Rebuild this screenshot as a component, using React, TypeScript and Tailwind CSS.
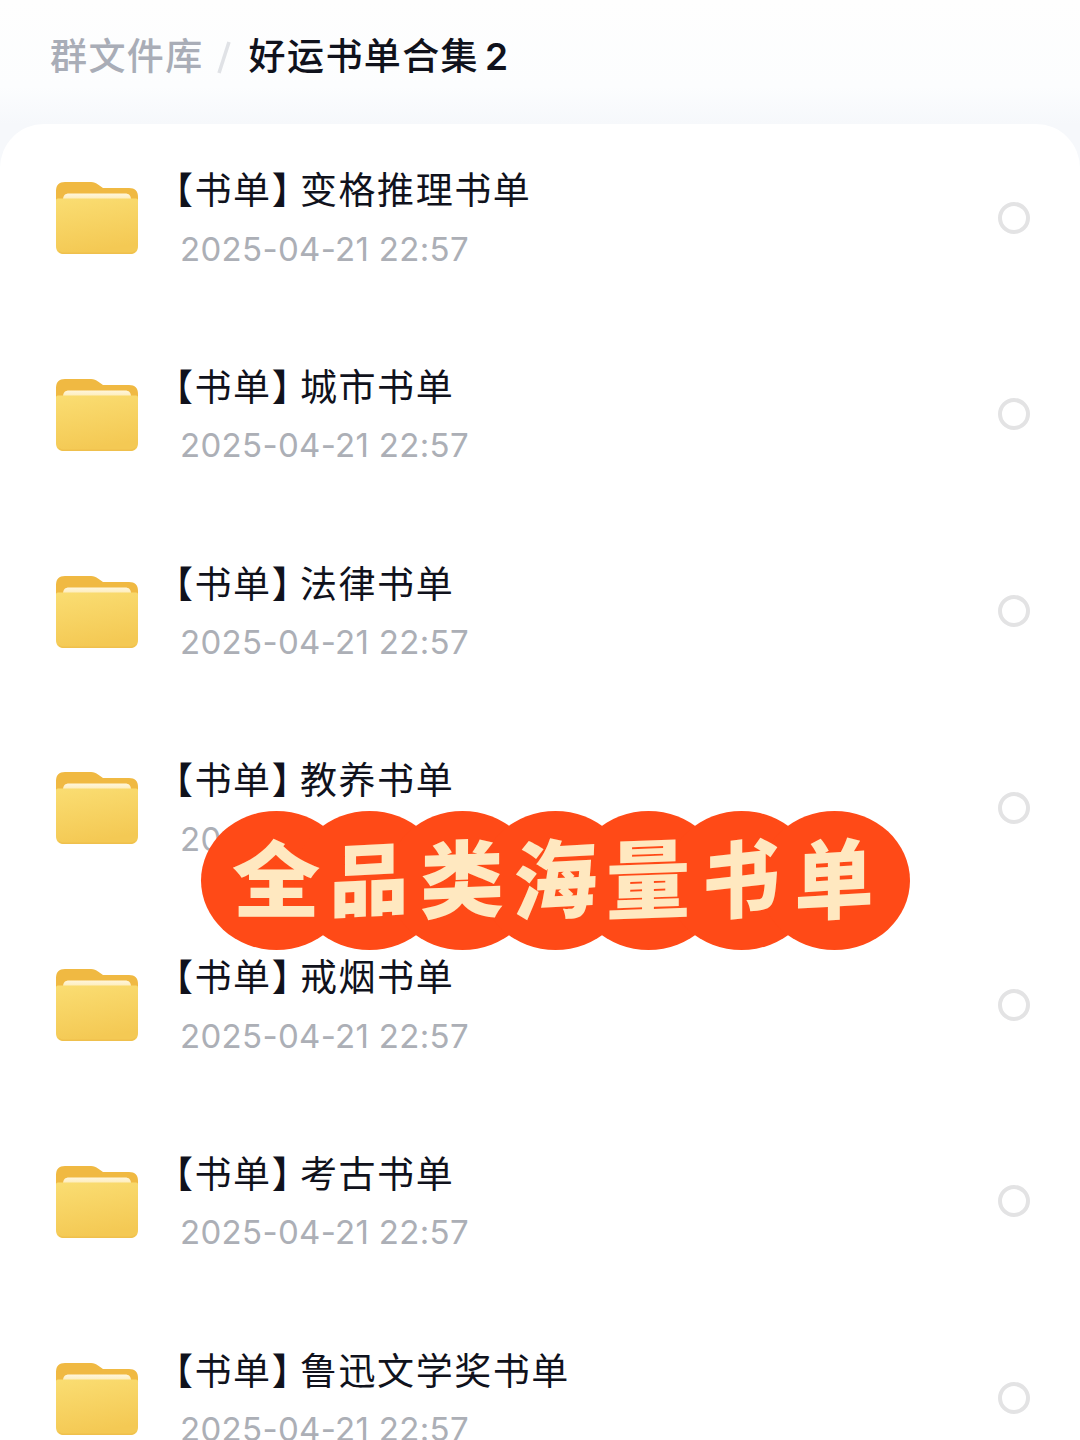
import React from 'react';

interface BookList {
  name: string;
  date: string;
}

const bookLists: BookList[] = [
  { name: '变格推理书单', date: '2025-04-21 22:57' },
  { name: '城市书单', date: '2025-04-21 22:57' },
  { name: '法律书单', date: '2025-04-21 22:57' },
  { name: '教养书单', date: '2025-04-21 22:57' },
  { name: '戒烟书单', date: '2025-04-21 22:57' },
  { name: '考古书单', date: '2025-04-21 22:57' },
  { name: '鲁迅文学奖书单', date: '2025-04-21 22:57' },
];

// Each character sits on its own overlapping disc
const bannerChars = [
  { char: '全', className: 'scale-x-[1.05] scale-y-[0.98]' },
  { char: '品', className: '-skew-y-3 scale-x-[0.94] scale-y-[0.94]' },
  { char: '类', className: '-skew-y-2' },
  { char: '海', className: '-skew-y-3 -skew-x-2 scale-y-[1.03]' },
  { char: '量', className: '-skew-y-2 scale-y-[1.03]' },
  { char: '书', className: '-skew-y-6 scale-x-[0.92]' },
  { char: '单', className: '-skew-y-3 scale-x-[0.94] scale-y-[1.04]' },
];

const FolderIcon: React.FC = () => (
  <svg width="84" height="76" viewBox="0 0 84 76" fill="none" className="shrink-0">
    <defs>
      <linearGradient id="folderFront" x1="0" y1="0" x2="0.25" y2="1">
        <stop offset="0" stopColor="#fadd72" />
        <stop offset="1" stopColor="#f4c954" />
      </linearGradient>
      <linearGradient id="folderPaper" x1="0" y1="0" x2="0" y2="1">
        <stop offset="0" stopColor="#fff6dc" />
        <stop offset="1" stopColor="#fdebb4" />
      </linearGradient>
    </defs>
    <path
      d="M1 11C1 5 4 2 10 2H36C39 2 41 3 43 4.500L48 8H74C80 8 83 11 83 17V40H1Z"
      fill="#f0b942"
    />
    <path d="M8 20C8 15.500 10 13.500 14 13.500H70C74 13.500 76 15.500 76 20Z" fill="url(#folderPaper)" />
    <path
      d="M1 20.500C1 19 2 18.500 4 18.500H80C82 18.500 83 19 83 20.500V66C83 71.500 80 74 75 74H9C4 74 1 71.500 1 66Z"
      fill="url(#folderFront)"
    />
    <path d="M3 70C4.500 73 6.500 74 9 74H75C77.500 74 79.500 73 81 70C79 72 77 72.500 75 72.500H9C7 72.500 5 72 3 70Z" fill="#efc04d" />
  </svg>
);

const BookListRow: React.FC<{ item: BookList }> = ({ item }) => (
  <li className="flex h-[196.750px] shrink-0 items-start pr-[50px] pl-[54.500px]">
    <div className="pt-[56px]">
      <FolderIcon />
    </div>
    <div className="ml-[16.500px] flex-1 pt-[41px]">
      <div className="flex text-[37px] leading-[52px] tracking-[1.550px] whitespace-nowrap text-[#10121c]">
        <span className="w-[145px] pl-[1px]">【书单】</span>
        <span>{item.name}</span>
      </div>
      <div className="mt-[7.500px] pl-[25px] text-[33px] leading-[48px] tracking-[0.320px] whitespace-nowrap text-[#acafb6]">
        {item.date}
      </div>
    </div>
    <span className="mt-[77.500px] size-[32px] rounded-full border-[4px] border-[#e3e3e4]" />
  </li>
);

const Banner: React.FC = () => (
  <div className="absolute top-[811px] left-[201px] flex">
    {bannerChars.map(({ char, className }) => (
      <div
        key={char}
        className="-mr-[58px] flex h-[139px] w-[151px] items-center justify-center rounded-[50%] bg-[#ff4a17]"
      >
        <span className={`relative z-10 text-[84px] leading-none font-extrabold text-[#ffe8c0] ${className}`}>
          {char}
        </span>
      </div>
    ))}
  </div>
);

const App: React.FC = () => {
  return (
    <div className="relative flex h-[1440px] w-[1080px] flex-col overflow-hidden bg-[#f6f8fb] font-[Inter,'Noto_Sans_CJK_SC',sans-serif]">
      <header className="flex h-[124px] shrink-0 items-start bg-linear-to-b from-[#fefefe] via-[#fcfdfe] via-70% to-[#f6f8fb] pt-[30px] pl-[50px] text-[37px] leading-[54px] font-medium tracking-[1.400px] whitespace-nowrap">
        <span className="text-[#a9adb7]">群文件库</span>
        <svg width="16" height="36" viewBox="0 0 16 36" className="mt-[10px] ml-[12px]">
          <path d="M13 2L3 33" stroke="#e0e2e6" strokeWidth="3.500" />
        </svg>
        <span className="ml-[17px] text-[#10121c]">好运书单合集</span>
        <span className="ml-[6px] font-semibold text-[#10121c]">2</span>
      </header>
      <ul className="flex flex-1 flex-col overflow-hidden rounded-t-[44px] bg-white">
        {bookLists.map((item) => (
          <BookListRow key={item.name} item={item} />
        ))}
      </ul>
      <Banner />
    </div>
  );
};

export default App;
